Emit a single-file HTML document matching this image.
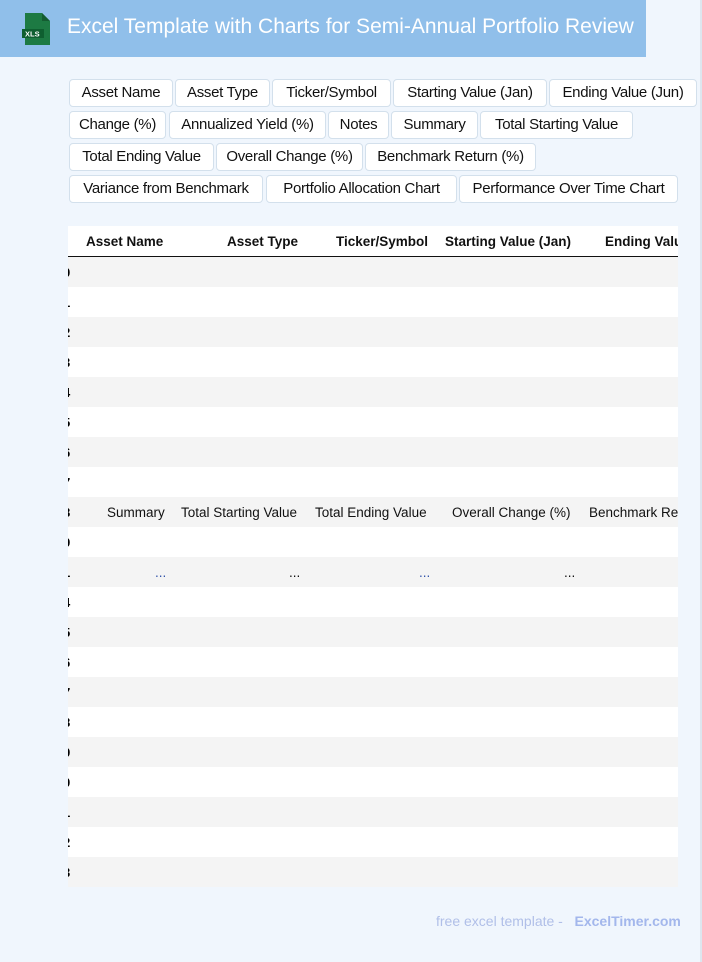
<!DOCTYPE html>
<html><head><meta charset="utf-8"><style>
*{margin:0;padding:0;box-sizing:border-box}
body{width:702px;height:962px;background:#f0f6fd;font-family:"Liberation Sans",sans-serif;position:relative;overflow:hidden;border-right:2px solid #dde6ef}
.hdr{position:absolute;left:0;top:0;width:646px;height:57px;background:#90bfea}
.hdr h1{position:absolute;left:67px;top:15px;font-size:21px;font-weight:normal;color:#fff;white-space:nowrap;letter-spacing:0px}
.b{position:absolute;height:28px;background:#fff;border:1px solid #d3e0ec;border-radius:4px;font-size:15px;line-height:26px;text-align:center;color:#111;white-space:nowrap;letter-spacing:-0.3px}
.tbl{position:absolute;left:68px;top:226px;width:610px;height:661px;background:#fff;overflow:hidden}
.r{position:absolute;left:0;width:610px;height:30px}
.g{background:#f4f4f4}
.t{position:absolute;font-size:13.5px;white-space:nowrap;color:#111}
.h{font-weight:bold;font-size:13.5px}
.n{position:absolute;left:-5px;font-weight:bold;font-size:13px}
</style></head><body>
<div class="hdr">
<svg style="position:absolute;left:22px;top:13px" width="28" height="32" viewBox="0 0 28 32"><path d="M3 0h17l8 8v24H3z" fill="#1d7a43"/><path d="M20 0l8 8h-8z" fill="#145c31"/><rect x="0" y="16" width="22" height="9" fill="#0f5f30"/><text x="3" y="23.5" font-size="7.5" fill="#fff" font-family="Liberation Sans" font-weight="bold">XLS</text></svg>
<h1>Excel Template with Charts for Semi-Annual Portfolio Review</h1></div>

<div class="b" style="left:69px;top:79px;width:104px">Asset Name</div>
<div class="b" style="left:175px;top:79px;width:95px">Asset Type</div>
<div class="b" style="left:272px;top:79px;width:119px">Ticker/Symbol</div>
<div class="b" style="left:393px;top:79px;width:154px">Starting Value (Jan)</div>
<div class="b" style="left:549px;top:79px;width:148px">Ending Value (Jun)</div>
<div class="b" style="left:69px;top:111px;width:97px">Change (%)</div>
<div class="b" style="left:169px;top:111px;width:157px">Annualized Yield (%)</div>
<div class="b" style="left:328px;top:111px;width:61px">Notes</div>
<div class="b" style="left:391px;top:111px;width:87px">Summary</div>
<div class="b" style="left:480px;top:111px;width:153px">Total Starting Value</div>
<div class="b" style="left:69px;top:143px;width:145px">Total Ending Value</div>
<div class="b" style="left:216px;top:143px;width:147px">Overall Change (%)</div>
<div class="b" style="left:365px;top:143px;width:171px">Benchmark Return (%)</div>
<div class="b" style="left:69px;top:175px;width:194px">Variance from Benchmark</div>
<div class="b" style="left:266px;top:175px;width:191px">Portfolio Allocation Chart</div>
<div class="b" style="left:459px;top:175px;width:219px">Performance Over Time Chart</div>

<div class="tbl">
<div class="r" style="top:0;border-bottom:1.5px solid #111;height:31px">
<span class="t h" style="left:18px;top:8px">Asset Name</span>
<span class="t h" style="left:159px;top:8px">Asset Type</span>
<span class="t h" style="left:268px;top:8px">Ticker/Symbol</span>
<span class="t h" style="left:377px;top:8px">Starting Value (Jan)</span>
<span class="t h" style="left:537px;top:8px">Ending Value (Jun)</span>
</div>
<div class="r g" style="top:31px"><span class="n" style="top:8px">0</span></div>
<div class="r" style="top:61px"><span class="n" style="top:8px">1</span></div>
<div class="r g" style="top:91px"><span class="n" style="top:8px">2</span></div>
<div class="r" style="top:121px"><span class="n" style="top:8px">3</span></div>
<div class="r g" style="top:151px"><span class="n" style="top:8px">4</span></div>
<div class="r" style="top:181px"><span class="n" style="top:8px">5</span></div>
<div class="r g" style="top:211px"><span class="n" style="top:8px">6</span></div>
<div class="r" style="top:241px"><span class="n" style="top:8px">7</span></div>
<div class="r g" style="top:271px"><span class="n" style="top:8px">8</span>
<span class="t" style="left:39px;top:8px">Summary</span>
<span class="t" style="left:113px;top:8px">Total Starting Value</span>
<span class="t" style="left:247px;top:8px">Total Ending Value</span>
<span class="t" style="left:384px;top:8px">Overall Change (%)</span>
<span class="t" style="left:521px;top:8px">Benchmark Return (%)</span></div>
<div class="r" style="top:301px"><span class="n" style="top:8px">9</span></div>
<div class="r g" style="top:331px"><span class="n" style="top:8px">1</span>
<span class="t" style="left:87px;top:8px;color:#3355aa">...</span>
<span class="t" style="left:221px;top:8px">...</span>
<span class="t" style="left:351px;top:8px;color:#3355aa">...</span>
<span class="t" style="left:496px;top:8px">...</span></div>
<div class="r" style="top:361px"><span class="n" style="top:8px">4</span></div>
<div class="r g" style="top:391px"><span class="n" style="top:8px">5</span></div>
<div class="r" style="top:421px"><span class="n" style="top:8px">6</span></div>
<div class="r g" style="top:451px"><span class="n" style="top:8px">7</span></div>
<div class="r" style="top:481px"><span class="n" style="top:8px">8</span></div>
<div class="r g" style="top:511px"><span class="n" style="top:8px">9</span></div>
<div class="r" style="top:541px"><span class="n" style="top:8px">0</span></div>
<div class="r g" style="top:571px"><span class="n" style="top:8px">1</span></div>
<div class="r" style="top:601px"><span class="n" style="top:8px">2</span></div>
<div class="r g" style="top:631px"><span class="n" style="top:8px">3</span></div>
</div>

<div style="position:absolute;left:436px;top:913px;font-size:14px;color:#b0bfe8;white-space:nowrap">free excel template - &nbsp;&nbsp;<b style="color:#a3b7ec">ExcelTimer.com</b></div>
</body></html>
